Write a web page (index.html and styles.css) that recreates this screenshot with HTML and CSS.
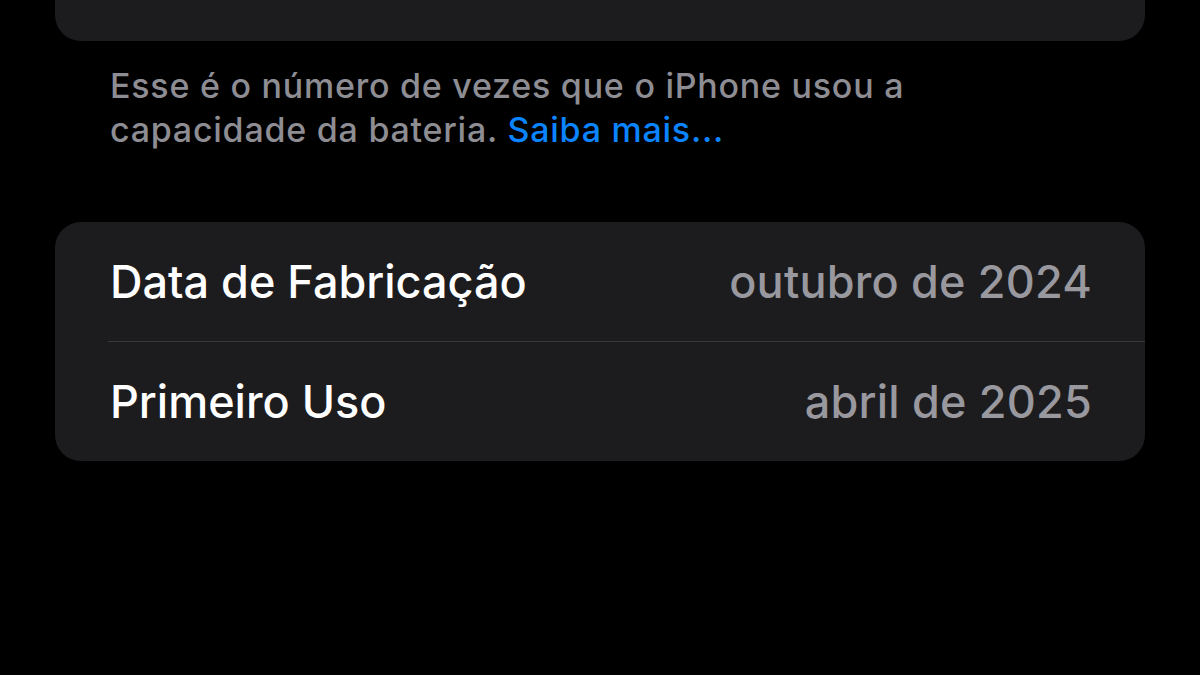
FILE: index.html
```html
<!DOCTYPE html>
<html lang="pt-BR">
<head>
    <meta charset="UTF-8">
    <meta name="viewport" content="width=device-width, initial-scale=1.0">
    <title>Bateria</title>
    <link rel="stylesheet" href="styles.css">
</head>
<body>
    <div class="screen">
        <div class="group group-top"></div>

        <p class="footnote">
            Esse é o número de vezes que o iPhone usou a<br>
            capacidade da bateria. <a href="#" class="link">Saiba mais...</a>
        </p>

        <div class="group">
            <div class="row">
                <span class="label">Data de Fabricação</span>
                <span class="value">outubro de 2024</span>
            </div>
            <div class="row">
                <span class="label">Primeiro Uso</span>
                <span class="value">abril de 2025</span>
            </div>
        </div>
    </div>
</body>
</html>
```

FILE: styles.css
```css
* {
    margin: 0;
    padding: 0;
    box-sizing: border-box;
}

body {
    background: #000;
    font-family: Inter, "Noto Sans", sans-serif;
    -webkit-font-smoothing: antialiased;
}

.screen {
    width: 1200px;
    height: 675px;
    padding: 0 55px;
    display: flex;
    flex-direction: column;
}

.group {
    background: #1c1c1e;
    border-radius: 26px;
}

.group-top {
    height: 41px;
    border-radius: 0 0 26px 26px;
}

.footnote {
    margin-top: 23px;
    padding: 0 55px;
    font-size: 34px;
    font-weight: 500;
    line-height: 44px;
    color: #8d8d93;
    letter-spacing: 0.75px;
}

.link {
    color: #0a84ff;
    text-decoration: none;
}

.group:last-child {
    margin-top: 70px;
}

.row {
    height: 119px;
    margin-left: 53px;
    padding-right: 53px;
    display: flex;
    align-items: center;
    justify-content: space-between;
}

.row + .row {
    border-top: 1px solid #38383a;
    height: 120px;
}

.label {
    font-size: 45px;
    font-weight: 500;
    color: #fff;
    margin-left: 2px;
    letter-spacing: 0;
}

.value {
    font-size: 45px;
    font-weight: 500;
    color: #98989e;
    letter-spacing: 0.2px;
}
```
